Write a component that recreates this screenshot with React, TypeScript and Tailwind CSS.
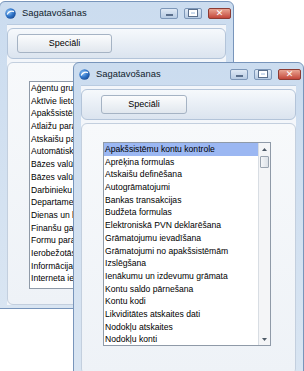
import React from 'react'

const frontItems = [
  'Apakšsistēmu kontu kontrole',
  'Aprēķina formulas',
  'Atskaišu definēšana',
  'Autogrāmatojumi',
  'Bankas transakcijas',
  'Budžeta formulas',
  'Elektroniskā PVN deklarēšana',
  'Grāmatojumu ievadīšana',
  'Grāmatojumi no apakšsistēmām',
  'Izslēgšana',
  'Ienākumu un izdevumu grāmata',
  'Kontu saldo pārnešana',
  'Kontu kodi',
  'Likviditātes atskaites dati',
  'Nodokļu atskaites',
  'Nodokļu konti',
]

const backItems = [
  'Aģentu grupas',
  'Aktīvie lietotāji',
  'Apakšsistēmu kontu kontrole',
  'Atlaižu paraugi',
  'Atskaišu parametri',
  'Automātiskā numerācija',
  'Bāzes valūta',
  'Bāzes valūtas kursi',
  'Darbinieku grupas',
  'Departamenti',
  'Dienas un laika formāti',
  'Finanšu gada beigas',
  'Formu parametri',
  'Ierobežotās piekļuves',
  'Informācija par uzņēmumu',
  'Interneta iestatījumi',
]

function AppIcon() {
  return (
    <svg width="11" height="11" viewBox="0 0 11 11">
      <defs>
        <radialGradient id="ig" cx="0.35" cy="0.35" r="0.7">
          <stop offset="0" stopColor="#8ec3f5" />
          <stop offset="0.6" stopColor="#2f74c8" />
          <stop offset="1" stopColor="#1b4f9a" />
        </radialGradient>
      </defs>
      <circle cx="5.5" cy="5.5" r="5.2" fill="url(#ig)" />
      <path d="M2.2 6.5 C3.5 3.2 7 2.6 9 3.6" stroke="#ffffff" strokeWidth="1.2" fill="none" />
    </svg>
  )
}

function CaptionButtons() {
  return (
    <div className="flex items-center gap-[6px]">
      <div className="w-[18px] h-[11px] rounded-[2px] border border-[#7d97b8] bg-gradient-to-b from-[#dfe9f5] to-[#b7cbe3] flex items-end justify-center pb-[2px]">
        <div className="w-[7px] h-[2px] bg-white border border-[#5a6f8c]" />
      </div>
      <div className="w-[18px] h-[11px] rounded-[2px] border border-[#7d97b8] bg-gradient-to-b from-[#dfe9f5] to-[#b7cbe3] flex items-center justify-center">
        <div className="w-[8px] h-[6px] border-[2px] border-white outline outline-1 outline-[#5a6f8c]" />
      </div>
      <div className="w-[23px] h-[11px] rounded-[2px] border border-[#8c3b33] bg-gradient-to-b from-[#e8a493] to-[#c2453a] flex items-center justify-center text-white text-[9px] font-bold leading-none" style={{ fontFamily: '"DejaVu Sans", sans-serif' }}>
        ✕
      </div>
    </div>
  )
}

function Win({ className, btnClass, items, selected, listH, panelPad }: {
  className: string
  btnClass: string
  items: string[]
  selected?: boolean
  listH: string
  panelPad: string
}) {
  return (
    <div className={`absolute flex flex-col border border-[#7895bb] rounded-t-[6px] bg-gradient-to-b from-[#cbdcef] to-[#d9e5f2] ${className}`}>
      <div className="h-[22px] shrink-0 flex items-center pl-[5px] pr-[2px]">
        <AppIcon />
        <span className="ml-[6px] text-[9.4px] text-[#101c2c]" style={{ fontFamily: '"Liberation Sans", Arial, sans-serif' }}>
          Sagatavošanas
        </span>
        <div className="flex-1" />
        <CaptionButtons />
      </div>
      <div className="flex-1 flex flex-col mx-[7px] mb-[6px] pt-[3px] gap-[3px] bg-[#f3f6fa] border-t border-[#b9cbe0]">
        <div className="h-[31px] shrink-0 rounded-[6px] border border-[#b3c4d9] bg-gradient-to-b from-[#f6f9fc] to-[#dbe4ef] flex items-center">
          <div className={`h-[19px] rounded-[3px] border border-[#a5b3c4] bg-gradient-to-b from-[#fbfcfd] to-[#e1e7ee] flex items-center justify-center text-[9px] text-black ${btnClass}`} style={{ fontFamily: '"Liberation Sans", Arial, sans-serif' }}>
            Speciāli
          </div>
        </div>
        <div className={`flex-1 rounded-[6px] border border-[#c3cfde] bg-gradient-to-b from-[#f7f9fb] to-[#eef2f7] pl-[21px] pt-[18px] ${panelPad}`}>
          <div className={`w-[168px] ${listH} border border-[#8f9aa8] bg-white flex overflow-hidden`}>
            <div className="flex-1 overflow-hidden" style={{ fontFamily: '"Liberation Sans", Arial, sans-serif' }}>
              {items.map((t, i) => (
                <div
                  key={t}
                  className={`h-[12.7px] leading-[12.7px] pl-[1px] text-[8.6px] text-black whitespace-nowrap overflow-hidden ${selected && i === 0 ? 'bg-[#9bb7f2]' : ''}`}
                >
                  {t}
                </div>
              ))}
            </div>
            {selected && (
              <div className="w-[12px] border-l border-[#d8dde3] bg-[#f4f5f7] flex flex-col">
                <div className="h-[12px] flex items-center justify-center">
                  <svg width="5" height="3" viewBox="0 0 5 3"><path d="M0 3 L2.5 0 L5 3 Z" fill="#4d5966" /></svg>
                </div>
                <div className="mt-[1px] h-[12px] mx-[1px] rounded-[1px] border border-[#9aa4b0] bg-gradient-to-r from-[#f4f6f8] to-[#dde2e8]" />
                <div className="flex-1" />
                <div className="h-[12px] flex items-center justify-center">
                  <svg width="5" height="3" viewBox="0 0 5 3"><path d="M0 0 L2.5 3 L5 0 Z" fill="#4d5966" /></svg>
                </div>
              </div>
            )}
          </div>
        </div>
      </div>
    </div>
  )
}

export default function App() {
  return (
    <div className="relative w-[304px] h-[371px] overflow-hidden bg-white">
      <Win
        className="left-[-1px] top-[1px] w-[235px] h-[308px]"
        btnClass="ml-[9px] w-[95px]"
        items={backItems}
        listH="h-[208px]"
        panelPad="pb-[15px]"
      />
      <Win
        className="left-[73px] top-[62px] w-[231px] h-[320px]"
        btnClass="ml-[19px] w-[86px]"
        items={frontItems}
        selected
        listH="h-[204px]"
        panelPad="pb-[9px]"
      />
    </div>
  )
}
